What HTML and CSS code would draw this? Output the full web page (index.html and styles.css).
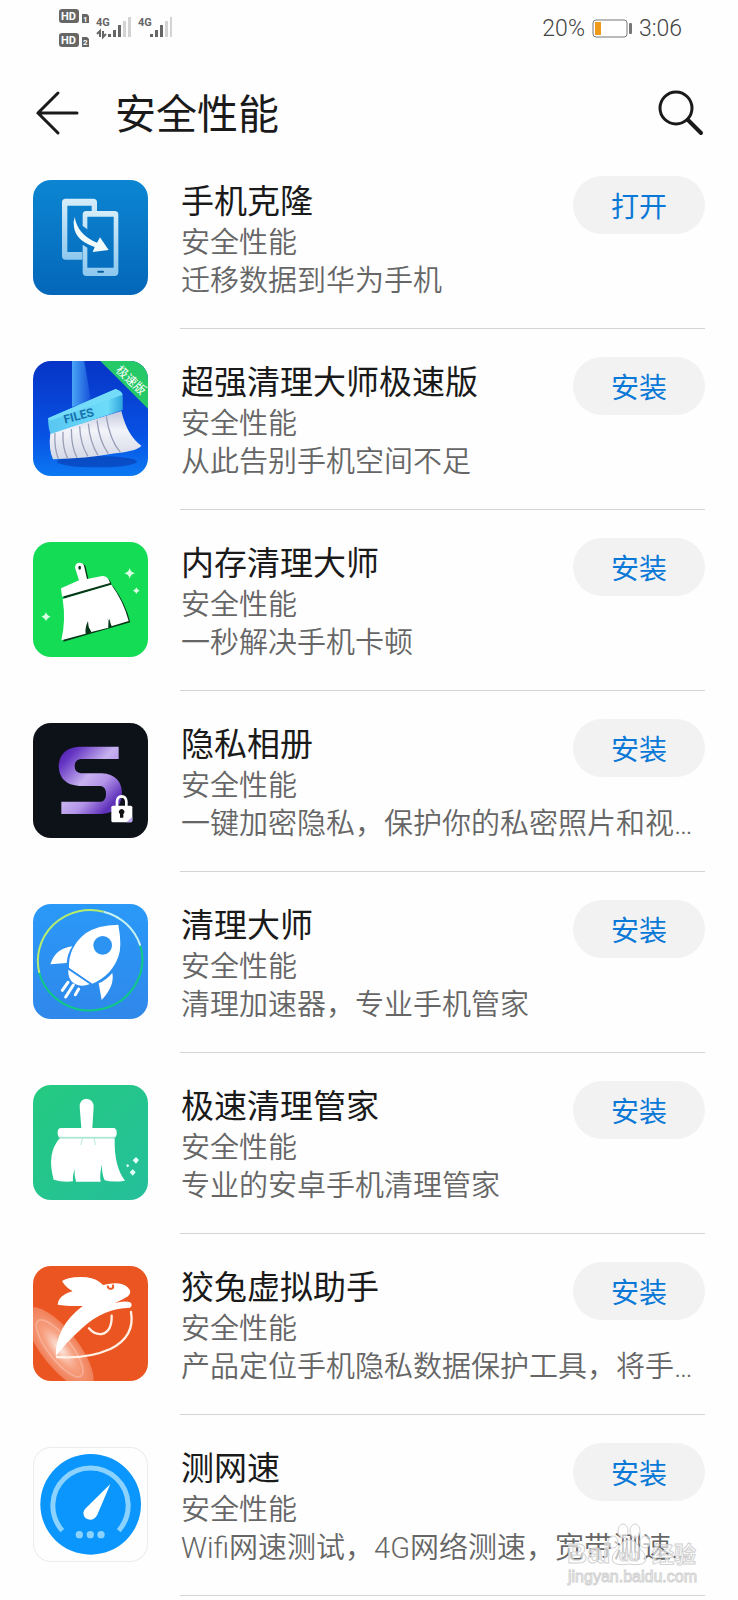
FILE: index.html
```html
<!DOCTYPE html>
<html lang="zh-CN">
<head>
    <meta charset="utf-8">
    <title>安全性能</title>
    <meta name="viewport" content="width=device-width, initial-scale=1.0">
    <link rel="stylesheet" href="styles.css">
</head>
<body>
<div class="page">
    <div class="status">
        <svg class="signal" width="114" height="40" viewBox="58 8 114 40">
            <rect x="59" y="9" width="20" height="14" rx="3" fill="#666"/>
            <rect x="59" y="33" width="20" height="14" rx="3" fill="#666"/>
            <path d="M82 14h5l2 2v7h-7zM82 37h5l2 2v8h-7z" fill="#666"/>
            <g class="hd">
                <text x="61" y="20">HD</text>
                <text x="61" y="44">HD</text>
            </g>
            <g class="sim">
                <text x="83" y="22">1</text>
                <text x="83" y="45">2</text>
            </g>
            <g class="net">
                <text x="96" y="26">4G</text>
                <text x="138" y="26">4G</text>
            </g>
            <path d="M97 34l3-3v6M103 31v6l3-3" fill="none" stroke="#666" stroke-width="2"/>
            <g id="bars">
                <path d="M108 34h3v3h-3zM113 30h3v7h-3zM118 25h3v12h-3z" fill="#666"/>
                <path d="M123 21h3v16h-3zM128 17h3v20h-3z" fill="#d3d3d3"/>
            </g>
            <use href="#bars" x="42"/>
        </svg>
        <div class="power">
            <span>20%</span>
            <svg width="40" height="20" viewBox="0 0 40 20">
                <rect x="1" y="1" width="34" height="17" rx="3" fill="#fff" stroke="#777"/>
                <rect x="3" y="3" width="6" height="13" fill="#f09a1c"/>
                <rect x="37" y="4" width="3" height="11" rx="1" fill="#777"/>
            </svg>
            <span>3:06</span>
        </div>
    </div>

    <header class="header">
        <button class="tool" aria-label="返回">
            <svg width="46" height="46" viewBox="0 0 46 46">
                <path d="M25 3L5 23l20 20M5 23h39" fill="none" stroke="#1a1a1a" stroke-width="3" stroke-linecap="round"/>
            </svg>
        </button>
        <h1>安全性能</h1>
        <button class="tool" aria-label="搜索">
            <svg width="46" height="46" viewBox="0 0 46 46">
                <circle cx="18" cy="18" r="16" fill="none" stroke="#1a1a1a" stroke-width="3"/>
                <path d="M30 30l13 13" stroke="#1a1a1a" stroke-width="4" stroke-linecap="round"/>
            </svg>
        </button>
    </header>

    <ul class="list">
        <li class="item">
            <svg class="icon" viewBox="38 42 345 345">
                <defs>
                    <linearGradient id="cloneBg" x1="0" y1="0" x2="0" y2="1"><stop offset="0" stop-color="#0c86d2"/><stop offset="1" stop-color="#0467b9"/></linearGradient>
                    <linearGradient id="cloneFg" x1="0" y1="0" x2="0" y2="1"><stop offset="0" stop-color="#d5edf9"/><stop offset="1" stop-color="#8dc8ee"/></linearGradient>
                </defs>
                <rect x="38" y="42" width="345" height="345" fill="url(#cloneBg)"/>
                <path fill="url(#cloneFg)" d="M136 98h83q11 0 11 11v26h-16v-16h-73v139h45v23h-50q-11 0-11-11V109q0-11 11-11z"/>
                <path fill="url(#cloneFg)" d="M198 135h85q11 0 11 11v173q0 11-11 11h-85q-11 0-11-11v-83l14 9v60h79V152h-79v38l-14-10v-34q0-11 11-11z"/>
                <path d="M163 153q9 54 67 77l9-16 26 38-48 6 6-15q-57-19-62-60-3-17 2-30z" fill="#f2fafc"/>
                <rect x="231" y="314" width="20" height="6" rx="3" fill="#0a5da0"/>
            </svg>
            <h2>手机克隆</h2>
            <p class="kind">安全性能</p>
            <p class="desc">迁移数据到华为手机</p>
            <button class="get">打开</button>
        </li>
        <li class="item">
            <svg class="icon" viewBox="38 30 345 345">
                <defs>
                    <linearGradient id="filesBg" x1="0" y1="0" x2="0" y2="1"><stop offset="0" stop-color="#0734c6"/><stop offset=".65" stop-color="#0752e4"/><stop offset="1" stop-color="#0c78f2"/></linearGradient>
                    <linearGradient id="filesBar" x1="0" y1="0" x2="1" y2="0"><stop offset="0" stop-color="#58c6f2"/><stop offset=".8" stop-color="#6ddcf8"/><stop offset="1" stop-color="#30a5dd"/></linearGradient>
                    <linearGradient id="filesStick" x1="0" y1="0" x2="1" y2="0"><stop offset="0" stop-color="#4aa5f6"/><stop offset="1" stop-color="#1550d8"/></linearGradient>
                    <linearGradient id="filesHair" x1="0" y1="0" x2="0" y2="1"><stop offset="0" stop-color="#c3c9dc"/><stop offset=".4" stop-color="#f3f4fa"/><stop offset="1" stop-color="#d4d8e6"/></linearGradient>
                </defs>
                <rect x="38" y="30" width="345" height="345" fill="url(#filesBg)"/>
                <path d="M155 30h37l20 120-57 18z" fill="url(#filesStick)"/>
                <ellipse cx="230" cy="332" rx="120" ry="17" fill="#0639ac" opacity=".6"/>
                <path d="M90 246L303 180q18 75 60 104-10 15-78 23-90 16-187 18-14-30-8-79z" fill="url(#filesHair)"/>
                <path d="M104 246q-3 43 10 78M128 242q-2 50 14 80M153 234q0 55 17 86M178 226q2 55 25 90M204 218q5 57 29 95M230 208q7 63 34 100M258 196q10 70 42 108" fill="none" stroke="#9a9fb8" stroke-width="4"/>
                <path d="M83 202L286 114q18 7 21 17v46L91 249q-7-15-8-47z" fill="url(#filesBar)"/>
                <path d="M83 202L286 114q18 7 21 17L89 209z" fill="#74dcf9"/>
                <text class="files" x="0" y="0" transform="translate(134 218) rotate(-15)">FILES</text>
                <path d="M240 30h143v143z" fill="#25c967"/>
                <text class="ribbon" x="0" y="0" transform="translate(284 60) rotate(43)">极速版</text>
            </svg>
            <h2>超强清理大师极速版</h2>
            <p class="kind">安全性能</p>
            <p class="desc">从此告别手机空间不足</p>
            <button class="get">安装</button>
        </li>
        <li class="item">
            <svg class="icon" viewBox="38 33 345 345">
                <rect x="38" y="33" width="345" height="345" fill="#15dc55"/>
                <g fill="#08381a" transform="translate(5 3)">
                    <path d="M164 110q1-16 15-15 12 1 13 14l8 35-23 7z"/>
                    <path d="M122 174l124-37q17-1 23 21L125 200z"/>
                    <path d="M127 203l146-41q37 50 52 109l-114 33-87 25q12-58 3-126z"/>
                </g>
                <path d="M164 110q1-16 15-15 12 1 13 14l8 35 46-9q17-1 23 21L125 197l-3-25 54-24z" fill="#fff"/>
                <path d="M127 204l146-43q37 50 52 109l-52 16q-5-11-4-24-7 16-5 28l-54 14q-7-15-7-34-10 22-7 38l-73 20q14-60 4-124z" fill="#fff"/>
                <path d="M196 270q10 17 8 35l9-3q-10-15-17-32zM261 262q7 14 4 26l9-3q-8-12-13-23z" fill="#08381a"/>
                <ellipse cx="178" cy="110" rx="4" ry="6" fill="#08381a"/>
                <path d="M328 111q3 13 16 16-13 3-16 16-3-13-16-16 13-3 16-16zM348 169q2 8 10 10-8 2-10 10-2-8-10-10 8-2 10-10zM77 243q3 11 14 14-11 3-14 14-3-11-14-14 11-3 14-14z" fill="#d9ffe3"/>
            </svg>
            <h2>内存清理大师</h2>
            <p class="kind">安全性能</p>
            <p class="desc">一秒解决手机卡顿</p>
            <button class="get">安装</button>
        </li>
        <li class="item">
            <svg class="icon" viewBox="38 33 345 345">
                <defs>
                    <linearGradient id="albumS" x1="0" y1="0" x2="1" y2="1"><stop offset="0" stop-color="#4514a6"/><stop offset=".16" stop-color="#6636c4"/><stop offset=".45" stop-color="#c7b2ef"/><stop offset=".62" stop-color="#b394e8"/><stop offset=".85" stop-color="#5d2fb9"/><stop offset="1" stop-color="#7a51cc"/></linearGradient>
                </defs>
                <rect x="38" y="33" width="345" height="345" fill="#0d1118"/>
                <path d="M295 104v37H182q-19 2-19 22 0 19 19 21h63q58 4 60 60-2 57-60 62H123v-37h119q15-2 15-23 0-21-15-24h-65q-60-4-62-59 2-55 62-59z" fill="url(#albumS)"/>
                <path d="M290 285v-17q1-14 14-15 13 1 14 15v17" fill="none" stroke="#fff" stroke-width="8"/>
                <rect x="273" y="281" width="63" height="50" rx="5" fill="#fff"/>
                <path d="M336 314v12q0 5-5 5h-13z" fill="#b9a3ec"/>
                <path d="M299 306a8 8 0 1 1 10 0v11h-10z" fill="#111"/>
            </svg>
            <h2>隐私相册</h2>
            <p class="kind">安全性能</p>
            <p class="desc">一键加密隐私，保护你的私密照片和视频文件</p>
            <button class="get">安装</button>
        </li>
        <li class="item">
            <svg class="icon" viewBox="38 33 345 345">
                <defs>
                    <linearGradient id="rocketBg" x1="0" y1="0" x2="0" y2="1"><stop offset="0" stop-color="#2a99f8"/><stop offset="1" stop-color="#2f88ea"/></linearGradient>
                </defs>
                <rect x="38" y="33" width="345" height="345" fill="url(#rocketBg)"/>
                <g fill="none" stroke-width="6">
                    <path d="M57 240A157 153 0 0 1 250 56" stroke="#b5ec70"/>
                    <path d="M250 56A157 153 0 0 1 360 158" stroke="#c5f1ee"/>
                    <path d="M360 158A157 153 0 1 1 57 240" stroke="#10c982"/>
                </g>
                <path d="M294 95q12 65 0 96-20 56-78 81l-70-48q-2-62 50-103 35-25 98-26z" fill="#fff"/>
                <path d="M156 160q-15 22-17 50l-49 4q15-48 66-54zM276 240q8 38-32 81l-9-50q22-9 41-31zM144 228l65 45q-20 8-37 3-31-10-28-48z" fill="#fff"/>
                <path d="M144 228l67 45" stroke="#2d90f0" stroke-width="4"/>
                <circle cx="247" cy="157" r="28" fill="#2d93f3"/>
                <path d="M143 268l-17 24M159 276l-23 36M175 288l-10 17" stroke="#fff" stroke-width="9" stroke-linecap="round"/>
            </svg>
            <h2>清理大师</h2>
            <p class="kind">安全性能</p>
            <p class="desc">清理加速器，专业手机管家</p>
            <button class="get">安装</button>
        </li>
        <li class="item">
            <svg class="icon" viewBox="38 33 345 345">
                <defs>
                    <linearGradient id="broomBg" x1="0" y1="0" x2="1" y2="1"><stop offset="0" stop-color="#24ca80"/><stop offset="1" stop-color="#25bf9b"/></linearGradient>
                </defs>
                <rect x="38" y="33" width="345" height="345" fill="url(#broomBg)"/>
                <path d="M178 98q0-22 20-24 21 2 22 24l-4 64h63q10 1 10 12v6q0 9-10 11H122q-10-2-10-11v-6q0-11 10-12h61z" fill="#fff"/>
                <path d="M118 193h165q-2 86 31 127-35 6-61-1-9-17-8-48-8 31-4 52H167q-6-18-4-38-7 23-5 37-30 4-58-5-22-78 18-124z" fill="#fff"/>
                <path d="M113 190h174M187 193l-6 20M222 193l3 20" stroke="#92dfc9" stroke-width="2" fill="none"/>
                <path d="M347 249l9 9-9 11-10-10zM337 286l9 9-9 10-9-10zM322 270l5 5-5 5-5-5z" fill="#e3fff7"/>
            </svg>
            <h2>极速清理管家</h2>
            <p class="kind">安全性能</p>
            <p class="desc">专业的安卓手机清理管家</p>
            <button class="get">安装</button>
        </li>
        <li class="item">
            <svg class="icon" viewBox="38 33 345 345">
                <defs>
                    <radialGradient id="rabbitGlow"><stop offset="0" stop-color="#fff" stop-opacity=".9"/><stop offset=".5" stop-color="#ffd2bf" stop-opacity=".6"/><stop offset="1" stop-color="#f6a184" stop-opacity=".55"/></radialGradient>
                </defs>
                <rect x="38" y="33" width="345" height="345" fill="#ea5522"/>
                <g transform="rotate(52 118 280)">
                    <ellipse cx="118" cy="280" rx="150" ry="55" fill="url(#rabbitGlow)"/>
                    <ellipse cx="118" cy="280" rx="105" ry="34" fill="none" stroke="#fff" stroke-opacity=".25" stroke-width="5"/>
                </g>
                <path d="M106 304q0-90 81-151-50 1-75-4 2-28 45-40-22-13-32-31 24-15 74-11 31 4 49 23 52-14 74 7 15 15 1 27-14 9-40 20 31-9 49-1 5 9-3 15-82 2-144 62-53 48-79 84z" fill="#fff"/>
                <path d="M262 92q1 11 11 9 9-2 4-12" fill="none" stroke="#ea5522" stroke-width="6"/>
                <path d="M110 306q90 7 160-24 75-37 62-111M206 220q17 20 38 17 31-7 30-55" fill="none" stroke="#fff0e5" stroke-width="7" stroke-linecap="round"/>
            </svg>
            <h2>狡兔虚拟助手</h2>
            <p class="kind">安全性能</p>
            <p class="desc">产品定位手机隐私数据保护工具，将手机数据</p>
            <button class="get">安装</button>
        </li>
        <li class="item">
            <svg class="icon framed" viewBox="38 33 345 345">
                <circle cx="211" cy="205" r="151" fill="#0a96fc"/>
                <path d="M126 284A113 113 0 1 1 295 284" fill="none" stroke="#8bd2ff" stroke-width="15"/>
                <path d="M270 144L231 236q-8 15-22 15-19-2-20-21 1-8 8-14z" fill="#fff"/>
                <g fill="#8bd2ff"><circle cx="177" cy="296" r="11"/><circle cx="210" cy="296" r="11"/><circle cx="242" cy="296" r="11"/></g>
            </svg>
            <h2>测网速</h2>
            <p class="kind">安全性能</p>
            <p class="desc">Wifi网速测试，4G网络测速，宽带测速…</p>
            <button class="get">安装</button>
        </li>
    </ul>

    <div class="watermark">
        <svg width="136" height="68" viewBox="0 0 136 68">
            <g fill="#fff" fill-opacity=".6" stroke="#d2d2d2">
                <ellipse cx="57" cy="10" rx="5" ry="7"/>
                <ellipse cx="69" cy="10" rx="5" ry="7"/>
                <ellipse cx="47" cy="21" rx="5" ry="6"/>
                <ellipse cx="79" cy="21" rx="5" ry="6"/>
                <path d="M63 19q7 0 11 9 8 7 5 13-4 4-16 2-12 2-16-2-3-6 5-13 4-9 11-9z"/>
                <text class="brand" x="1" y="42">Bai</text>
                <text class="du" x="53" y="40">du</text>
                <text class="cjk" x="86" y="41">经验</text>
                <text class="site" x="2" y="61">jingyan.baidu.com</text>
            </g>
        </svg>
    </div>
</div>
</body>
</html>
```
FILE: styles.css
```css
html,body,h1,h2,p,ul{
    padding: 0;
    margin: 0;
}
body{
    background: #fefefe;
    color: #1a1a1a;
    font-family: "Noto Sans CJK SC", sans-serif;
}
button{
    padding: 0;
    border: none;
    background: none;
    font-family: inherit;
    cursor: pointer;
}
svg{
    display: block;
}
.page{
    position: relative;
}

/* status bar */
.status{
    display: flex;
    justify-content: space-between;
    align-items: center;
    height: 56px;
    padding: 0 56px 0 58px;
}
.power{
    display: flex;
    align-items: center;
    gap: 7px;
    padding-top: 2px;
    font: 300 23px/28px Roboto, sans-serif;
    color: #444;
}
.signal text{
    font-family: Roboto, sans-serif;
    font-weight: 700;
}
.hd{
    font-size: 11px;
    fill: #fff;
}
.sim{
    font-size: 8px;
    fill: #fff;
}
.net{
    font-size: 11px;
    fill: #666;
}

/* title bar */
.header{
    display: flex;
    align-items: center;
    height: 70px;
    padding: 22px 34px 0 33px;
}
.header h1{
    flex: 1;
    padding: 0 0 4px 36px;
    font-size: 41px;
    line-height: 60px;
    font-weight: 400;
}

/* app list */
.list{
    list-style: none;
    padding: 0 33px;
}
.item{
    display: grid;
    grid-template-columns: 115px minmax(0, 1fr) 132px;
    grid-template-rows: 48px 38px 38px;
    column-gap: 33px;
    padding: 28px 0;
    border-bottom: 1px solid;
    border-image: linear-gradient(to right, transparent 148px, #d4d4d4 148px) 1;
}
.icon{
    grid-row: 1 / 4;
    width: 115px;
    height: 115px;
    margin-top: 4px;
    border-radius: 18px;
}
.framed{
    box-shadow: inset 0 0 0 1px #ececec;
}
.item h2{
    font-size: 33px;
    line-height: 46px;
    font-weight: 400;
    white-space: nowrap;
}
.kind,.desc{
    grid-column: 2;
    font-family: Roboto, "Noto Sans CJK SC", sans-serif;
    font-size: 29px;
    line-height: 38px;
    font-weight: 350;
    color: #666;
}
.desc{
    grid-column: 2 / 4;
    overflow-x: clip;
    white-space: nowrap;
    text-overflow: ellipsis;
}
.get{
    grid-column: 3;
    grid-row: 1 / 3;
    align-self: start;
    height: 58px;
    border-radius: 29px;
    background: #f2f2f2;
    color: #0a78d6;
    font-size: 28px;
}
.files{
    font: 700 36px Roboto, sans-serif;
    fill: #1771ad;
}
.ribbon{
    font-size: 36px;
    fill: #fff;
}

.watermark{
    position: absolute;
    right: 36px;
    bottom: 7px;
}
.brand{
    font: 700 28px "Liberation Sans", sans-serif;
}
.du{
    font: 700 16px "Liberation Sans", sans-serif;
}
.cjk{
    font-size: 22px;
    font-weight: 700;
}
.site{
    font: 16px "Liberation Sans", sans-serif;
}
```
